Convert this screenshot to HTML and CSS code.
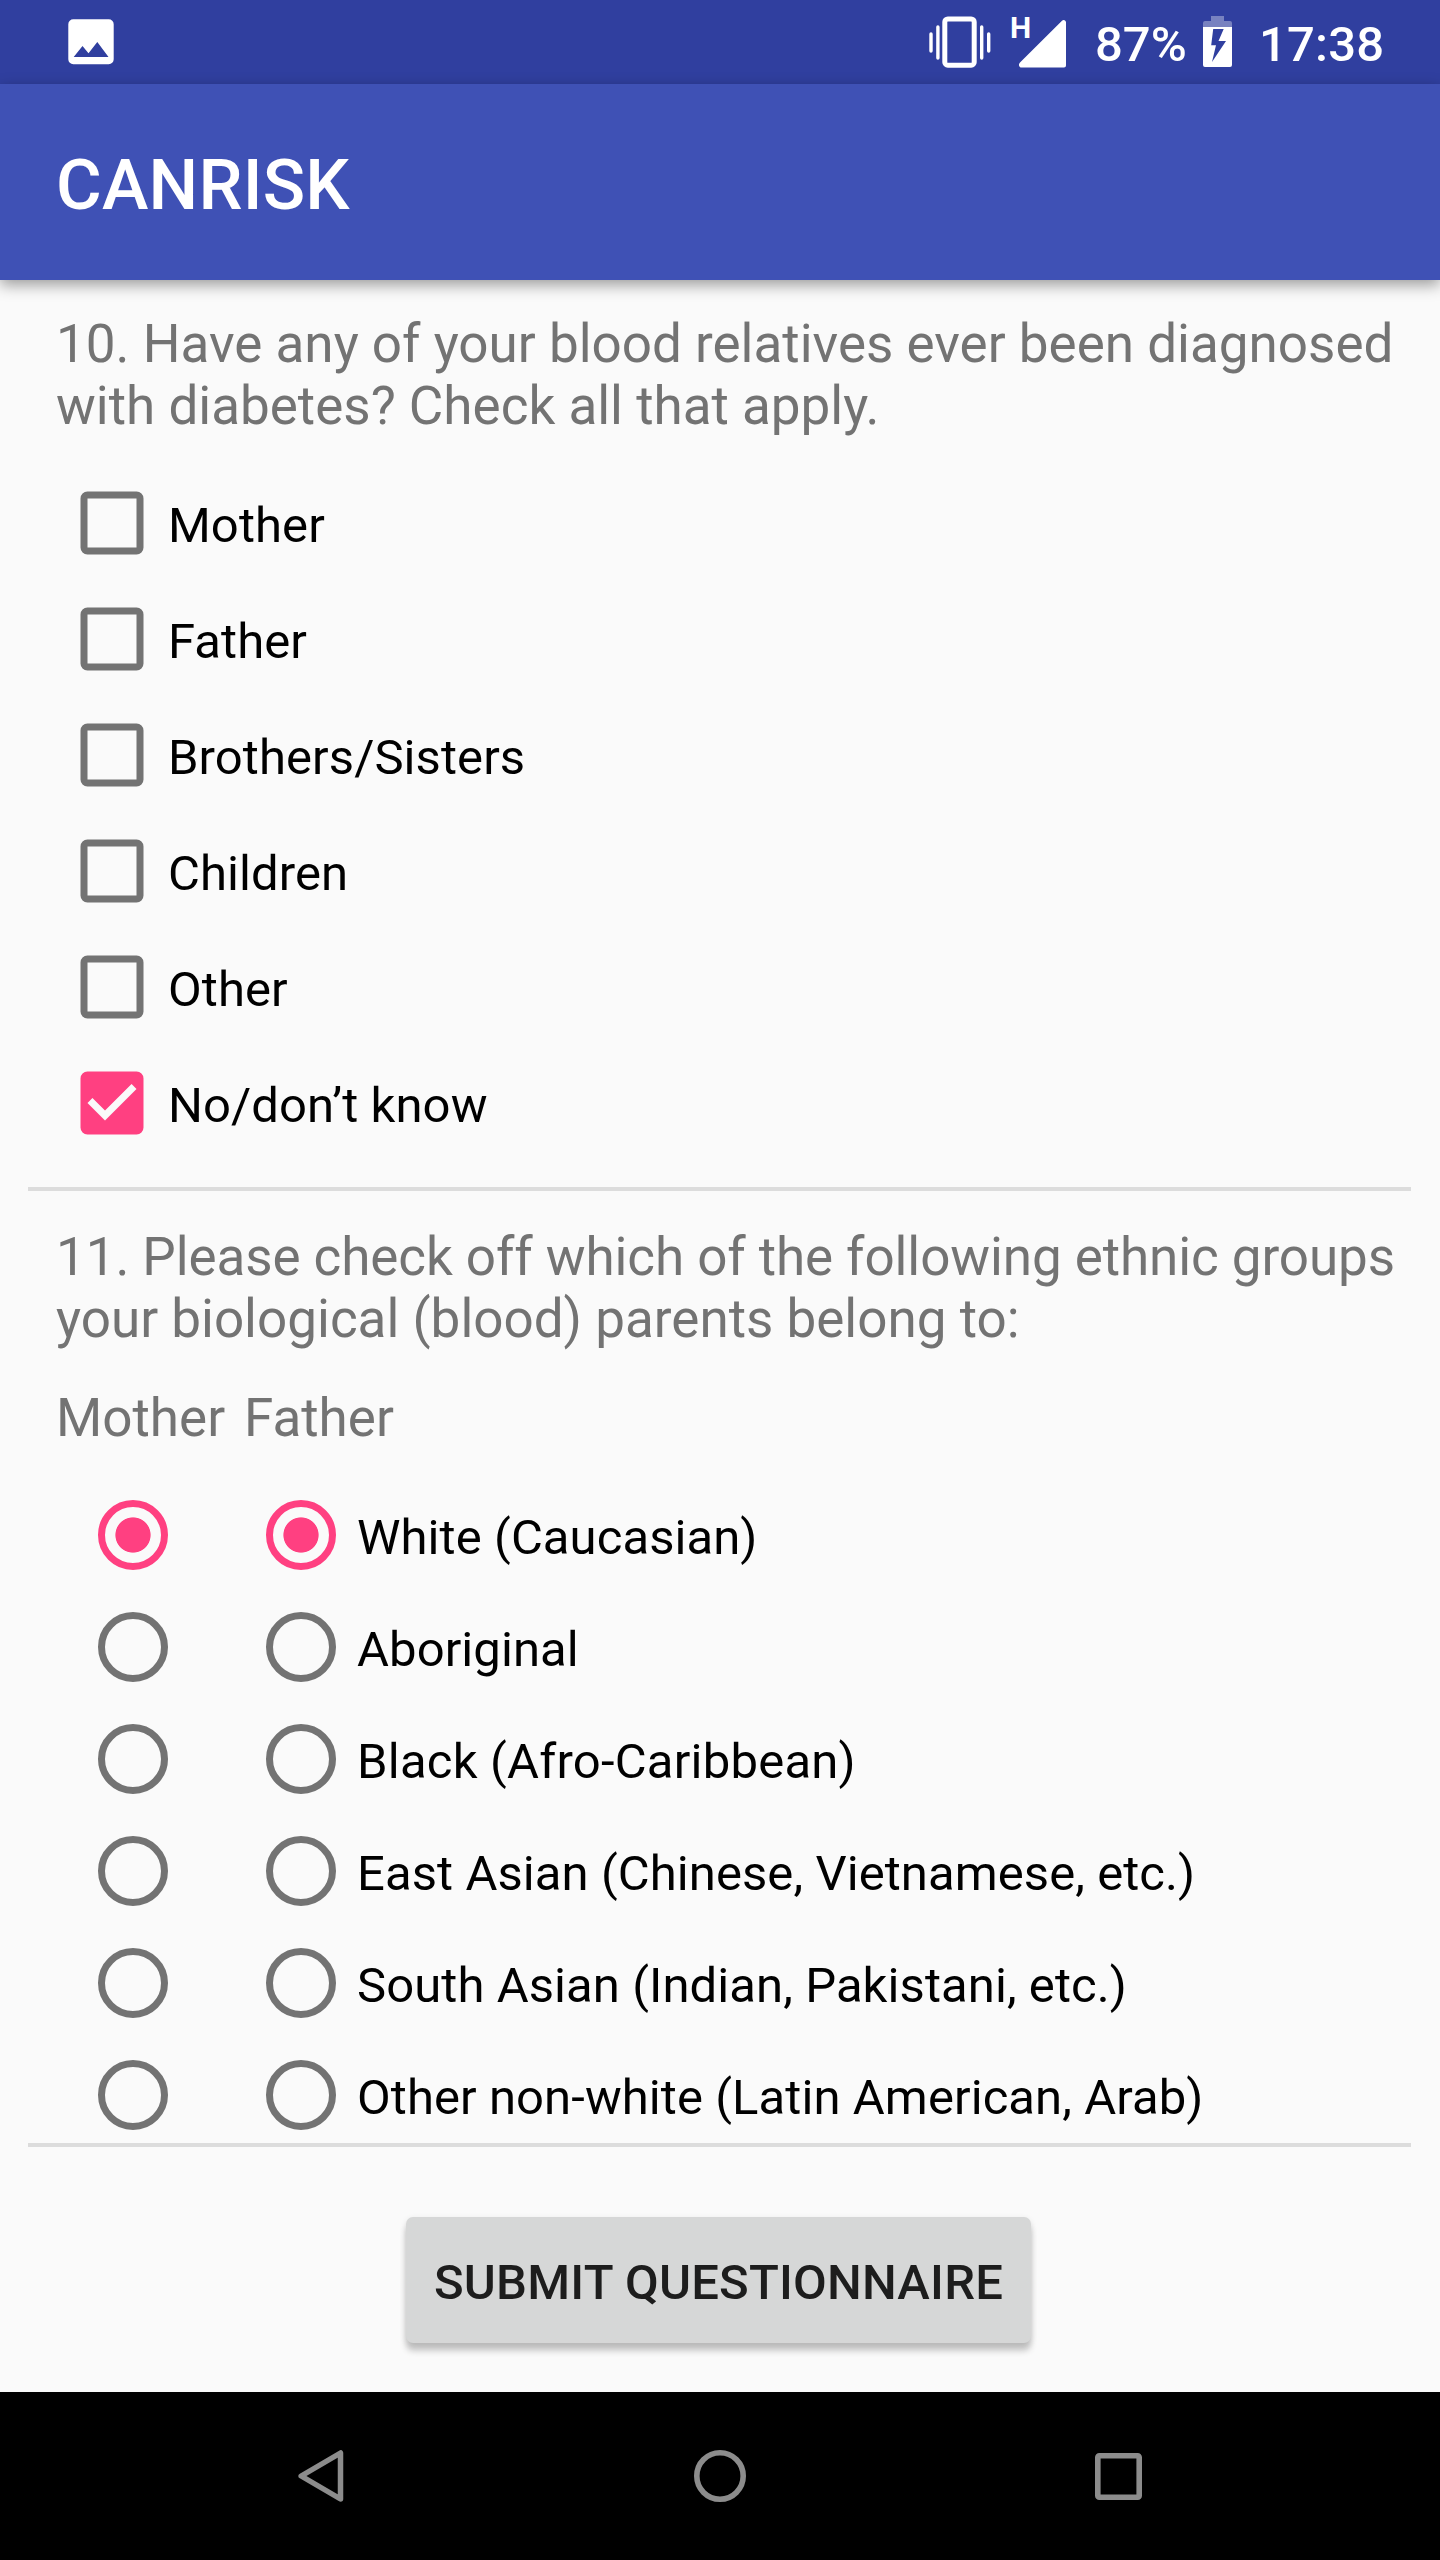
FILE: index.html
```html
<!DOCTYPE html>
<html lang="en">
<head>
<meta charset="utf-8">
<title>CANRISK</title>
<link rel="stylesheet" href="styles.css">
</head>
<body>
<div class="screen">
  <div class="status">
    <svg class="photo" width="46" height="46" viewBox="0 0 46 46"><path fill="#fff" fill-rule="evenodd" d="M5.3.3h35.4a5 5 0 0 1 5 5v35a5 5 0 0 1-5 5H5.3a5 5 0 0 1-5-5v-35a5 5 0 0 1 5-5zM5.700 38h34.800L29.300 23l-8.800 11.300-6-7.300z"/></svg>
    <div class="status-right">
      <svg class="vibrate" width="62" height="52" viewBox="0 0 62 52" fill="none" stroke="#fff">
        <rect x="15.800" y="3" width="29.400" height="46.200" rx="3" stroke-width="5"/>
        <path stroke-width="3.400" stroke-linecap="round" d="M2 18v17M8.900 11v31M52.700 11v31M59.700 18v17"/>
      </svg>
      <div class="signal">
        <span class="network">H</span>
        <svg width="48" height="48" viewBox="0 0 48 48"><path fill="#fff" d="M43 .8 1 42.500c-2.200 2.300-.6 5 1.500 5H45q2 0 2-2v-43C47 .3 44.500-.7 43 .8z"/></svg>
      </div>
      <span class="percent">87%</span>
      <svg class="battery" width="29" height="51" viewBox="0 0 29 51">
        <path fill="#fff" opacity=".35" d="M8 0h13v5h6q2 0 2 2v4H0V7q0-2 2-2h6z"/>
        <path fill="#fff" fill-rule="evenodd" d="M0 11h29v38q0 2-2 2H2q-2 0-2-2zM10.200 13 8.200 29.200h4.800L9 46l14-21h-7.500l5.200-12z"/>
      </svg>
      <span class="clock">17:38</span>
    </div>
  </div>
  <header class="appbar"><h1>CANRISK</h1></header>
  <main>
    <section class="relatives">
      <p class="question">10. Have any of your blood relatives ever been diagnosed<br>with diabetes? Check all that apply.</p>
      <div class="checks">
        <div class="check"><svg class="box" viewBox="0 0 64 64"><rect x="4" y="4" width="56" height="56" rx="3.500"/></svg><span>Mother</span></div>
        <div class="check"><svg class="box" viewBox="0 0 64 64"><rect x="4" y="4" width="56" height="56" rx="3.500"/></svg><span>Father</span></div>
        <div class="check"><svg class="box" viewBox="0 0 64 64"><rect x="4" y="4" width="56" height="56" rx="3.500"/></svg><span>Brothers/Sisters</span></div>
        <div class="check"><svg class="box" viewBox="0 0 64 64"><rect x="4" y="4" width="56" height="56" rx="3.500"/></svg><span>Children</span></div>
        <div class="check"><svg class="box" viewBox="0 0 64 64"><rect x="4" y="4" width="56" height="56" rx="3.500"/></svg><span>Other</span></div>
        <div class="check"><svg class="box on" viewBox="0 0 64 64"><rect x="4" y="4" width="56" height="56" rx="3.500"/><path transform="translate(-10 -10) scale(3.5)" d="M10 17l-5-5 1.410-1.410L10 14.170l7.590-7.590L19 8z"/></svg><span>No/don’t know</span></div>
      </div>
    </section>
    <section class="ethnicity">
      <p class="question"><span class="snug">11. Please check off which of the following ethnic groups</span><br>your biological (blood) parents belong to:</p>
      <div class="heads"><span>Mother</span><span>Father</span></div>
      <div class="radios">
        <div class="choice"><i class="radio on"></i><i class="radio on"></i><span>White (Caucasian)</span></div>
        <div class="choice"><i class="radio"></i><i class="radio"></i><span>Aboriginal</span></div>
        <div class="choice"><i class="radio"></i><i class="radio"></i><span class="wide">Black (Afro-Caribbean)</span></div>
        <div class="choice"><i class="radio"></i><i class="radio"></i><span>East Asian (Chinese, Vietnamese, etc.)</span></div>
        <div class="choice"><i class="radio"></i><i class="radio"></i><span>South Asian (Indian, Pakistani, etc.)</span></div>
        <div class="choice"><i class="radio"></i><i class="radio"></i><span>Other non-white (Latin American, Arab)</span></div>
      </div>
    </section>
    <div class="actions"><button class="submit">SUBMIT QUESTIONNAIRE</button></div>
  </main>
  <nav class="navbar">
    <svg width="46" height="54" viewBox="0 0 46 54"><path fill="none" stroke="#8c8c8c" stroke-width="5.500" stroke-linejoin="round" d="M42.500 4v46L3.200 27z"/></svg>
    <svg width="52" height="52" viewBox="0 0 52 52"><circle cx="26" cy="26" r="23.200" fill="none" stroke="#8c8c8c" stroke-width="5.600"/></svg>
    <svg width="47" height="47" viewBox="0 0 47 47"><rect x="2.800" y="2.800" width="41.400" height="41.400" rx="1.500" fill="none" stroke="#8c8c8c" stroke-width="5.600"/></svg>
  </nav>
</div>
</body>
</html>
```
FILE: styles.css
```css
* { box-sizing: border-box; }
body { margin: 0; background: #fafafa; font-family: Roboto, "Liberation Sans", sans-serif; }
svg { display: block; flex: none; }
.screen { width: 1440px; height: 2560px; display: flex; flex-direction: column; overflow: hidden; }

.status { flex: none; height: 84px; background: #303f9f; color: #fff; display: flex; justify-content: space-between; padding: 0 56px 0 68px; font-size: 49px; font-weight: 500; line-height: 85px; }
.photo { margin-top: 19px; }
.status-right { display: flex; align-items: flex-start; }
.vibrate { margin: 16px 19px 0 0; }
.signal { display: flex; padding-top: 20px; margin-right: 28px; }
.network { width: 9px; margin-top: -7px; font-size: 30px; font-weight: 700; line-height: 30px; }
.percent, .clock { padding-top: 2px; white-space: nowrap; }
.percent { width: 108px; }
.battery { margin: 16px 27px 0 0; }
.clock { width: 125px; letter-spacing: .2px; }

.appbar { flex: none; height: 196px; background: #3f51b5; color: #fff; padding: 6px 56px 0; display: flex; align-items: center; box-shadow: 0 5px 14px rgba(0, 0, 0, .38); }
.appbar h1 { margin: 0; font-size: 70px; font-weight: 500; line-height: 82px; letter-spacing: .2px; }

main { flex: 1; display: flex; flex-direction: column; }
section { margin: 0 29px 0 28px; padding: 0 28px; border-bottom: 4px solid #dcdcdc; }
.relatives { height: 911px; padding-top: 33px; }
.ethnicity { height: 956px; padding-top: 35px; }
.question { margin: 0; font-size: 53px; line-height: 62px; color: #737373; white-space: nowrap; }
.snug { letter-spacing: -.09px; }
.checks { margin-top: 28px; }
.check { height: 116px; display: flex; align-items: center; padding-left: 24px; font-size: 49px; color: #000; }
.check span, .choice span { padding-top: 6px; line-height: 58px; letter-spacing: .08px; white-space: nowrap; }
.box { width: 64px; height: 64px; margin-right: 24px; fill: none; stroke: #737373; stroke-width: 7px; }
.box.on rect { fill: #ff4081; stroke: #ff4081; }
.box.on path { fill: #fafafa; stroke: none; }

.heads { display: flex; margin-top: 37px; font-size: 53px; line-height: 62px; color: #737373; }
.heads span:first-child { width: 188px; }
.radios { margin-top: 30px; }
.choice { height: 112px; display: flex; align-items: center; padding-left: 42px; font-size: 49px; color: #000; }
.choice .wide { letter-spacing: .22px; }
.radio { flex: none; width: 70px; height: 70px; border: 7px solid #737373; border-radius: 50%; margin-right: 98px; }
.radio + .radio { margin-right: 21px; }
.radio.on { border-color: #ff4081; background: radial-gradient(circle, #ff4081 17.200px, transparent 18px); }

.actions { display: flex; padding: 70px 0 0 406px; }
.submit { width: 625px; height: 126px; border: 0; border-radius: 7px; background: #d6d7d7; box-shadow: 0 8px 6px rgba(0, 0, 0, .2), 0 2px 6px rgba(0, 0, 0, .1); color: #1d1d1d; font: 500 49px/58px Roboto, "Liberation Sans", sans-serif; letter-spacing: .2px; padding: 6px 0 0; white-space: nowrap; }

.navbar { flex: none; height: 168px; background: #000; display: flex; align-items: center; justify-content: space-between; padding: 0 298px; }
```
